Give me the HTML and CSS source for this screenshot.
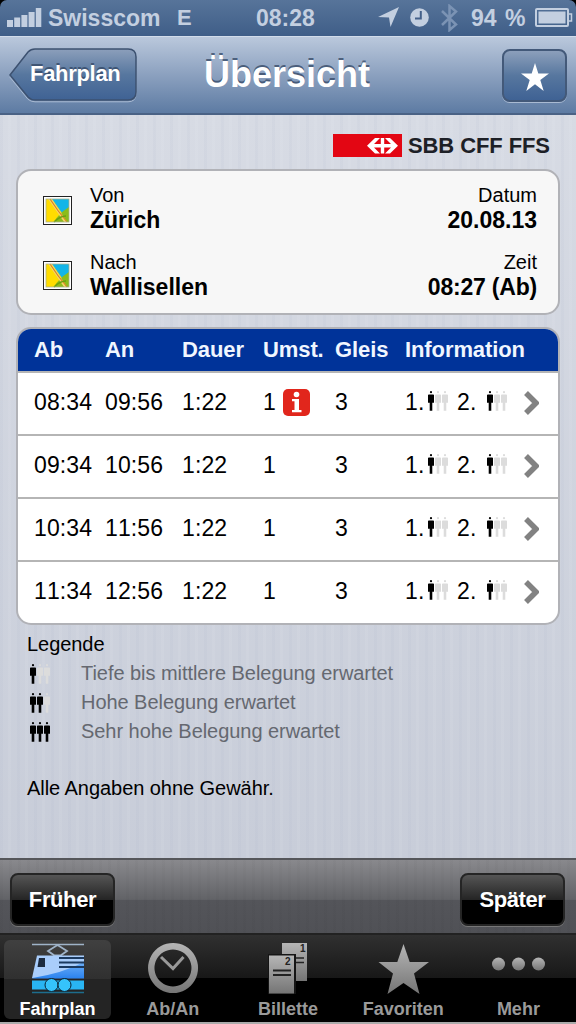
FILE: index.html
```html
<!DOCTYPE html>
<html lang="de">
<head>
    <meta charset="utf-8">
    <title>Übersicht</title>
    <link rel="stylesheet" href="styles.css">
</head>
<body>
    <!-- Shared icons -->
    <svg class="defs" width="0" height="0">
        <linearGradient id="grey" x1="0" y1="0" x2="0" y2="1">
            <stop offset="0" stop-color="#b5b5b5"/>
            <stop offset="1" stop-color="#757575"/>
        </linearGradient>
        <linearGradient id="blue" x1="0" y1="0" x2="0" y2="1">
            <stop offset="0" stop-color="#6fb0f8"/>
            <stop offset="1" stop-color="#2a82ee"/>
        </linearGradient>
        <symbol id="person" viewBox="0 0 6 20">
            <circle cx="3" cy="1.2" r="1.1"/>
            <path d="M0 4.2q0-.8.8-.8h4.400q.8 0 .8.8v7.600H4.300v8H1.700v-8H0z"/>
        </symbol>
        <symbol id="map" viewBox="0 0 29 29">
            <rect x=".5" y=".5" width="28" height="28" fill="#fff" stroke="#222"/>
            <rect x="3" y="3" width="23" height="23" fill="#ffdc00"/>
            <path d="M9 3h17v9l-7 5z" fill="#12b5e8"/>
            <path d="M26 11v15H11q4-8 15-15z" fill="#8cbc1a"/>
            <path d="M5 3h4l15 23h-3z" fill="#f3d66a"/>
            <path d="M7 3q7 11 17 23" stroke="#d9811e" stroke-width="1.100" fill="none"/>
            <path d="M11 26q6-6 12-6" stroke="#6a9f12" stroke-width="1.500" fill="none"/>
            <rect x="3" y="3" width="23" height="23" fill="none" stroke="#a9b08a" stroke-width=".8"/>
        </symbol>
        <symbol id="chevron" viewBox="0 0 15 24">
            <path d="M2 2l10 10L2 22" fill="none" stroke="#828282" stroke-width="5.500"/>
        </symbol>
    </svg>

    <div class="status">
        <svg class="signal" width="35" height="19" viewBox="0 0 35 19">
            <path d="M0 12h6v7H0zM7.200 9.500h6V19h-6zM14.400 7h6v12h-6zM21.600 4h6v15h-6zM28.800 0h5.500v19h-5.500z"/>
        </svg>
        <span class="carrier">Swisscom</span>
        <span class="network">E</span>
        <span class="clock">08:28</span>
        <svg class="arrow" width="21" height="20" viewBox="0 0 21 20"><path d="M21 0L12.500 20l-1.500-9.500L0 10z"/></svg>
        <svg class="alarm" width="19" height="19" viewBox="0 0 19 19">
            <circle cx="9.500" cy="9.500" r="9.300"/>
            <path d="M10.800 3v7.500H5" fill="none" stroke="#44618a" stroke-width="2"/>
        </svg>
        <svg class="bluetooth" width="17" height="28" viewBox="0 0 17 28">
            <path d="M1 7l14 13.500L8.500 26V2L15 7.500 1 21" fill="none" stroke="#7b93b4" stroke-width="2.500"/>
        </svg>
        <span class="percent">94 %</span>
        <svg class="battery" width="38" height="19" viewBox="0 0 38 19">
            <rect x="1" y="1" width="32" height="17" rx="1" fill="none" stroke="#c3cfe0" stroke-width="2"/>
            <rect x="3.500" y="3.500" width="27" height="12"/>
            <path d="M34 6h2.500v7H34" fill="none" stroke="#c3cfe0" stroke-width="1.500"/>
        </svg>
    </div>

    <div class="navbar">
        <div class="back">
            <svg class="back-shape" width="130" height="55" viewBox="0 0 130 55">
                <linearGradient id="backFill" x1="0" y1="0" x2="0" y2="1">
                    <stop offset="0" stop-color="#8c9fbb"/>
                    <stop offset="0.5" stop-color="#57779f"/>
                    <stop offset="1" stop-color="#3f6294"/>
                </linearGradient>
                <path d="M1 28L19 4q3-2.500 7-2.500h93q8 0 8 8v35q0 8-8 8H26q-4 0-7-2.500z" fill="none" stroke="#a9bad2" transform="translate(0 1.300)"/>
                <path d="M1 27L19 4q3-3 7-3h93q8 0 8 8v35q0 8-8 8H26q-4 0-7-3z" fill="url(#backFill)" stroke="#3c5170" stroke-width="1.500"/>
            </svg>
            <span class="back-label">Fahrplan</span>
        </div>
        <h1>Übersicht</h1>
        <div class="star-button">
            <svg width="28" height="28" viewBox="0 0 28 28"><path d="M14 0l3.300 10.500H28l-8.700 6.600L22.700 28 14 21.300 5.300 28l3.400-10.900L0 10.500h10.700z" fill="#fff"/></svg>
        </div>
    </div>

    <div class="content">
        <div class="brand">
            <svg width="69" height="23" viewBox="0 0 69 23">
                <rect width="69" height="23" fill="#e30613"/>
                <path d="M34 11.700L42 4h5l-6 6h6.800V4h3.400v6H58l-6-6h5l8 7.700-8 7.700h-5l6-6h-6.800v6h-3.400v-6H41l6 6h-5z" fill="#fff"/>
            </svg>
            <span>SBB CFF FFS</span>
        </div>

        <div class="card route">
            <div class="stop">
                <svg width="29" height="29"><use href="#map"/></svg>
                <div class="place"><span>Von</span><b>Zürich</b></div>
                <div class="when"><span>Datum</span><b>20.08.13</b></div>
            </div>
            <div class="stop">
                <svg width="29" height="29"><use href="#map"/></svg>
                <div class="place"><span>Nach</span><b>Wallisellen</b></div>
                <div class="when"><span>Zeit</span><b class="time">08:27 (Ab)</b></div>
            </div>
        </div>

        <div class="card table">
            <div class="row head">
                <span>Ab</span><span>An</span><span>Dauer</span><span>Umst.</span><span>Gleis</span><span>Information</span>
            </div>
            <div class="row">
                <span>08:34</span><span>09:56</span><span>1:22</span>
                <span class="change">1
                    <svg width="27" height="27" viewBox="0 0 27 27">
                        <rect width="27" height="27" rx="5" fill="#e1261c"/>
                        <circle cx="13.500" cy="5.500" r="2.800" fill="#fff"/>
                        <path d="M9 10h7v11h2.500v2.300H9V21h2.500v-8.700H9z" fill="#fff"/>
                    </svg>
                </span>
                <span>3</span>
                <span class="info">
                    <span>1.</span><span class="load low"><svg><use href="#person"/></svg><svg><use href="#person"/></svg><svg><use href="#person"/></svg></span>
                    <span>2.</span><span class="load low"><svg><use href="#person"/></svg><svg><use href="#person"/></svg><svg><use href="#person"/></svg></span>
                    <svg class="chevron"><use href="#chevron"/></svg>
                </span>
            </div>
            <div class="row">
                <span>09:34</span><span>10:56</span><span>1:22</span><span>1</span><span>3</span>
                <span class="info">
                    <span>1.</span><span class="load low"><svg><use href="#person"/></svg><svg><use href="#person"/></svg><svg><use href="#person"/></svg></span>
                    <span>2.</span><span class="load low"><svg><use href="#person"/></svg><svg><use href="#person"/></svg><svg><use href="#person"/></svg></span>
                    <svg class="chevron"><use href="#chevron"/></svg>
                </span>
            </div>
            <div class="row">
                <span>10:34</span><span>11:56</span><span>1:22</span><span>1</span><span>3</span>
                <span class="info">
                    <span>1.</span><span class="load low"><svg><use href="#person"/></svg><svg><use href="#person"/></svg><svg><use href="#person"/></svg></span>
                    <span>2.</span><span class="load low"><svg><use href="#person"/></svg><svg><use href="#person"/></svg><svg><use href="#person"/></svg></span>
                    <svg class="chevron"><use href="#chevron"/></svg>
                </span>
            </div>
            <div class="row">
                <span>11:34</span><span>12:56</span><span>1:22</span><span>1</span><span>3</span>
                <span class="info">
                    <span>1.</span><span class="load low"><svg><use href="#person"/></svg><svg><use href="#person"/></svg><svg><use href="#person"/></svg></span>
                    <span>2.</span><span class="load low"><svg><use href="#person"/></svg><svg><use href="#person"/></svg><svg><use href="#person"/></svg></span>
                    <svg class="chevron"><use href="#chevron"/></svg>
                </span>
            </div>
        </div>

        <div class="legend">
            <div class="legend-title">Legende</div>
            <div class="legend-row">
                <span class="load low"><svg><use href="#person"/></svg><svg><use href="#person"/></svg><svg><use href="#person"/></svg></span>
                <span>Tiefe bis mittlere Belegung erwartet</span>
            </div>
            <div class="legend-row">
                <span class="load medium"><svg><use href="#person"/></svg><svg><use href="#person"/></svg><svg><use href="#person"/></svg></span>
                <span>Hohe Belegung erwartet</span>
            </div>
            <div class="legend-row">
                <span class="load"><svg><use href="#person"/></svg><svg><use href="#person"/></svg><svg><use href="#person"/></svg></span>
                <span>Sehr hohe Belegung erwartet</span>
            </div>
            <div class="note">Alle Angaben ohne Gewähr.</div>
        </div>
    </div>

    <div class="toolbar">
        <div class="black-button">Früher</div>
        <div class="black-button">Später</div>
    </div>

    <div class="tabbar">
        <div class="tab active">
            <svg width="54" height="52" viewBox="0 0 54 52">
                <path d="M1 2.500h52" stroke="#9fb3c8" stroke-width="1.500"/>
                <path d="M26.500 3L36 9l-6.500 4.500h-6L17 9z" fill="none" stroke="#9fb3c8" stroke-width="1.800"/>
                <path d="M6 13.500h47V36H1z" fill="#a9cdfb"/>
                <path d="M1.500 36Q32 31 53 20v16.500H1z" fill="url(#blue)"/>
                <path d="M8 16h6v9H6.500z" fill="#1c2b40"/>
                <path d="M28 16h25M28 20.500h25M28 25h25" stroke="#1b3a60" stroke-width="1.800"/>
                <path d="M1 38.500h52v9H1z" fill="#29b5f3"/>
                <circle cx="20.500" cy="43" r="6.500" fill="#35c3fb" stroke="#0a2233"/>
                <circle cx="33.500" cy="43" r="6.500" fill="#35c3fb" stroke="#0a2233"/>
                <path d="M1 50.500h52" stroke="#1d6d8d" stroke-width="1.500"/>
            </svg>
            <span>Fahrplan</span>
        </div>
        <div class="tab">
            <svg width="52" height="52" viewBox="0 0 52 52">
                <path fill-rule="evenodd" d="M26 1a25 25 0 1 0 .1 0zM26 7.500a18.500 18.500 0 1 1-.1 0z" fill="url(#grey)"/>
                <path d="M14 15l12 11.500L36.500 15" fill="none" stroke="#999" stroke-width="3"/>
            </svg>
            <span>Ab/An</span>
        </div>
        <div class="tab">
            <svg width="40" height="52" viewBox="0 0 40 52">
                <path d="M14 1h25v38H14z" fill="url(#grey)"/>
                <path d="M27 16h9M27 20.500h9" stroke="#222" stroke-width="1.500"/>
                <path d="M0 12h28v40H0z" fill="#151515"/>
                <path d="M1 13.500h25v38H1z" fill="url(#grey)"/>
                <path d="M5 28.500h18M5 33h18" stroke="#222" stroke-width="1.800"/>
                <text x="32" y="9.500">1</text>
                <text x="17" y="22.500">2</text>
            </svg>
            <span>Billette</span>
        </div>
        <div class="tab">
            <svg width="52" height="52" viewBox="0 0 52 52"><path d="M26.500 2l6.200 18H52L37 31.500 42.500 52l-16-11L10.500 52 16 31.500 1.500 20h18.800z" fill="url(#grey)"/></svg>
            <span>Favoriten</span>
        </div>
        <div class="tab">
            <svg width="54" height="52" viewBox="0 0 54 52" fill="url(#grey)">
                <circle cx="7.500" cy="22" r="6.500"/>
                <circle cx="27.500" cy="22" r="6.500"/>
                <circle cx="47.500" cy="22" r="6.500"/>
            </svg>
            <span>Mehr</span>
        </div>
    </div>
</body>
</html>
```
FILE: styles.css
```css
* {
    box-sizing: border-box;
}

body {
    margin: 0;
    width: 576px;
    height: 1024px;
    overflow: hidden;
    display: flex;
    flex-direction: column;
    background-color: #000;
    font-family: "Liberation Sans", Arial, sans-serif;
    color: #000;
}

svg {
    display: block;
    flex: none;
}

.defs {
    position: absolute;
}

/* Status bar */
.status {
    height: 36px;
    flex: none;
    display: flex;
    align-items: center;
    padding-left: 7px;
    border-radius: 7px 7px 0 0;
    background: linear-gradient(#57749a, #3f5e88);
    color: #c3cfe0;
    fill: #c3cfe0;
    font-size: 23px;
    font-weight: bold;
    white-space: nowrap;
}

.carrier {
    width: 129px;
    margin-left: 6px;
}

.signal {
    margin-top: -2px;
}

.network {
    width: 79px;
    font-size: 22px;
}

.clock {
    width: 122px;
}

.arrow,
.alarm {
    margin-top: -2px;
}

.alarm {
    margin-left: 11px;
}

.bluetooth {
    margin-left: 12px;
}

.percent {
    width: 64px;
    margin-left: 13px;
    word-spacing: 2px;
}

.battery {
    margin-top: -2px;
}

/* Navigation bar */
.navbar {
    height: 79px;
    flex: none;
    display: grid;
    grid-template-columns: 137px 1fr 74px;
    align-items: center;
    border-top: 1px solid #d2dcea;
    border-bottom: 2px solid #4a6285;
    background: linear-gradient(#bac8dc, #8da2c0 48%, #5d7ba3);
    color: #fff;
    text-shadow: 0 -2px 0 rgba(50, 70, 100, 0.75);
}

.back {
    display: grid;
    padding-left: 9px;
    align-items: center;
}

.back > * {
    grid-area: 1 / 1;
}

.back-label {
    padding: 0 0 2px 21px;
    font-size: 22px;
    font-weight: bold;
    letter-spacing: -0.3px;
}

.navbar h1 {
    margin: 0;
    padding-left: 67px;
    font-size: 36px;
}

.star-button {
    width: 65px;
    height: 53px;
    display: flex;
    align-items: center;
    justify-content: center;
    border: 2px solid #435979;
    border-radius: 8px;
    background: linear-gradient(#8c9fbb, #57779f 50%, #3f6294);
    box-shadow: 0 1px 0 #a9bad2;
}

.star-button svg {
    margin-top: 3px;
}

/* Content */
.content {
    height: 743px;
    flex: none;
    padding: 18px 16px 0;
    background:
        repeating-linear-gradient(90deg, rgba(160, 170, 195, 0.08) 0 3px, transparent 3px 8px, rgba(255, 255, 255, 0.06) 8px 11px, transparent 11px 17px),
        linear-gradient(#d7dbe4, #c8cdd9);
}

.brand {
    height: 25px;
    display: flex;
    align-items: center;
    gap: 6px;
    padding-left: 317px;
    color: #1d2026;
    font-size: 22px;
    font-weight: bold;
    letter-spacing: -0.1px;
}

.card {
    width: 544px;
    border: 2px solid #b1b2b7;
    border-radius: 15px;
    overflow: hidden;
}

.route {
    height: 146px;
    margin-top: 11px;
    padding: 12px 21px 0 25px;
    background-color: #f7f7f7;
}

.stop {
    display: flex;
    height: 67px;
    font-size: 20px;
    line-height: 24px;
}

.stop svg {
    margin-top: 13px;
}

.stop + .stop svg {
    margin-top: 11px;
}

.place, .when {
    display: flex;
    flex-direction: column;
}

.place {
    flex: 1;
    padding-left: 18px;
}

.when {
    text-align: right;
}

.stop b {
    font-size: 23px;
    line-height: 26px;
}

.stop .time {
    letter-spacing: -0.2px;
}

.table {
    height: 298px;
    margin-top: 12px;
    background-color: #fff;
}

.row {
    height: 63px;
    display: grid;
    grid-template-columns: 71px 77px 81px 72px 70px 1fr;
    align-items: center;
    padding: 0 0 2px 16px;
    border-top: 2px solid #b5b5b5;
    font-size: 23px;
    font-kerning: none;
    letter-spacing: 0.1px;
}

.row.head {
    height: 42px;
    padding-bottom: 0;
    border-top: 0;
    background-color: #003399;
    color: #f0f6ff;
    font-size: 22px;
    font-weight: bold;
    letter-spacing: -0.1px;
}

.change {
    display: flex;
    align-items: center;
    gap: 7px;
}

.info {
    display: grid;
    grid-template-columns: 23px 29px 30px 37px 15px;
    align-items: center;
}

.chevron {
    width: 15px;
    height: 24px;
}

/* Occupancy pictogram */
.load {
    display: flex;
    gap: 1px;
    margin-top: -3px;
}

.load svg {
    width: 6px;
    height: 20px;
    fill: #000;
}

.load.low svg:nth-child(n+2),
.load.medium svg:nth-child(3) {
    fill: #dcdcdc;
}

.legend {
    padding: 8px 11px 0;
    font-size: 20px;
    line-height: 23px;
    letter-spacing: -0.05px;
}

.legend-title {
    height: 26px;
}

.legend-row {
    height: 29px;
    display: grid;
    grid-template-columns: 51px 1fr;
    align-items: center;
    padding-left: 3px;
    color: #656870;
}

.legend .load {
    margin-top: 1px;
}

.note {
    margin-top: 31px;
}

/* Bottom bars */
.toolbar {
    height: 77px;
    flex: none;
    display: flex;
    justify-content: space-between;
    padding: 13px 11px 0 10px;
    border-top: 2px solid #55565a;
    border-bottom: 2px solid #222;
    background:
        repeating-linear-gradient(90deg, rgba(0, 0, 0, 0.02) 0 3px, transparent 3px 9px),
        linear-gradient(#89898d, #626367 54%, #54555a 55%, #505156);
}

.black-button {
    width: 105px;
    height: 53px;
    border: 2px solid #252525;
    border-radius: 8px;
    background: linear-gradient(#555, #252525 50%, #000 51%);
    box-shadow: 0 1px 0 #777;
    color: #fff;
    font-size: 22px;
    font-weight: bold;
    letter-spacing: -0.4px;
    line-height: 49px;
    text-align: center;
}

.tabbar {
    height: 89px;
    flex: none;
    display: grid;
    grid-template-columns: repeat(5, 1fr);
    padding-top: 5px;
    border-bottom: 2px solid #aaa;
    background: linear-gradient(#303030, #181818 49%, #000 50%);
    color: #9a9a9a;
    font-size: 18px;
    font-weight: bold;
}

.tab {
    height: 79px;
    display: flex;
    flex-direction: column;
    align-items: center;
    padding-top: 2px;
    line-height: 30px;
}

.tab text {
    font-size: 10px;
    fill: #222;
}

.tab.active {
    width: 107px;
    margin-left: 4px;
    border-radius: 6px;
    background: linear-gradient(#404040, #303030 49%, #242424 50%);
    color: #fff;
}
```
